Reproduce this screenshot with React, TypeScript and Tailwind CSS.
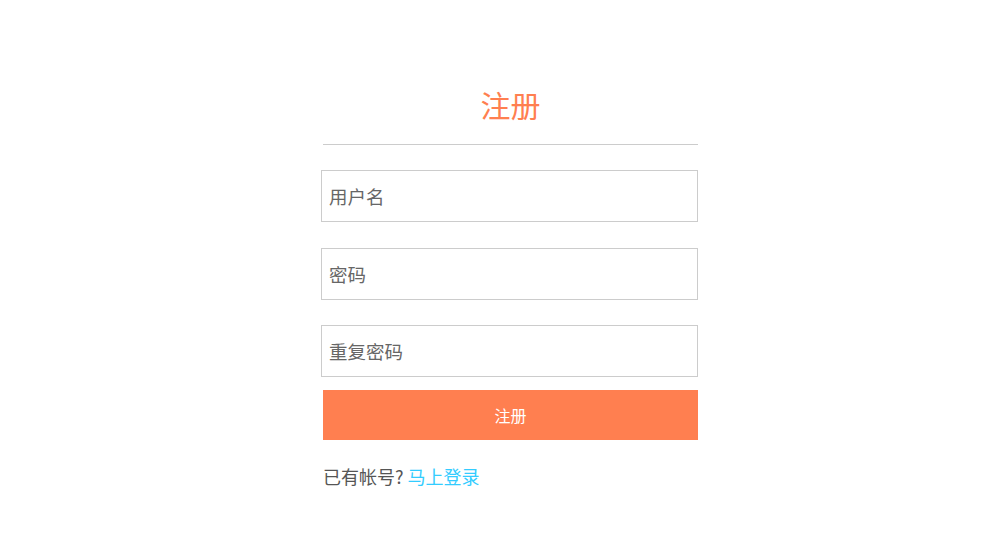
import React from 'react';

function App() {
  const fields = ['用户名', '密码', '重复密码'];

  return (
    <div
      className="min-h-[551px] w-full bg-white pt-[82px]"
      style={{ fontFamily: '"Noto Sans CJK SC", "Noto Sans", sans-serif' }}
    >
      <div className="ml-[323px] w-[375px]">
        <h1 className="h-[45px] text-center text-[30px] leading-[45px] text-[#ff7f50]">注册</h1>
        <div className="mt-[17px] h-px bg-[#cccccc]" />

        <form className="mt-[25px]">
          <input
            type="text"
            placeholder={fields[0]}
            className="-ml-[2px] block h-[52px] w-[377px] border border-[#cccccc] px-[7px] text-[18.5px] text-[#555] outline-none placeholder:text-[#666]"
          />
          <input
            type="password"
            placeholder={fields[1]}
            className="-ml-[2px] mt-[26px] block h-[52px] w-[377px] border border-[#cccccc] px-[7px] text-[18.5px] text-[#555] outline-none placeholder:text-[#666]"
          />
          <input
            type="password"
            placeholder={fields[2]}
            className="-ml-[2px] mt-[25px] block h-[52px] w-[377px] border border-[#cccccc] px-[7px] text-[18.5px] text-[#555] outline-none placeholder:text-[#666]"
          />
          <button
            type="button"
            className="mt-[13px] block h-[50px] w-full bg-[#ff7f50] text-[16px] text-white"
          >
            注册
          </button>
        </form>

        <p className="mt-[23px] text-[18px] leading-[27px] text-[#555]">
          已有帐号?{' '}
          <a href="#" className="text-[#33ccff]">
            马上登录
          </a>
        </p>
      </div>
    </div>
  );
}

export default App;
